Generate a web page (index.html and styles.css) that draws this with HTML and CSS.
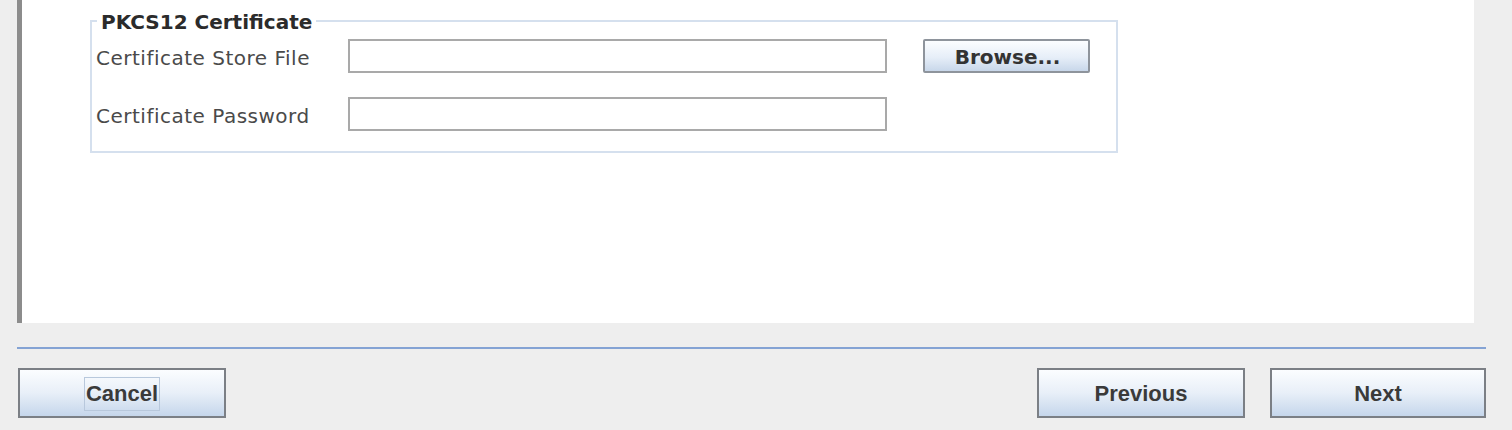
FILE: index.html
```html
<!DOCTYPE html>
<html>
<head>
<meta charset="utf-8">
<link rel="stylesheet" href="styles.css">
</head>
<body>
<div class="window">
  <div class="panel">
    <fieldset class="group">
      <legend class="legend">PKCS12 Certificate</legend>
      <div class="row">
        <label class="label">Certificate Store File</label>
        <input class="field" type="text">
        <button class="browse">Browse...</button>
      </div>
      <div class="row">
        <label class="label">Certificate Password</label>
        <input class="field" type="password">
      </div>
    </fieldset>
  </div>
  <div class="separator"></div>
  <div class="footer">
    <button class="btn"><span class="focus">Cancel</span></button>
    <div class="spacer"></div>
    <button class="btn">Previous</button>
    <button class="btn wide">Next</button>
  </div>
</div>
</body>
</html>
```

FILE: styles.css
```css
html, body {
  margin: 0;
  padding: 0;
  background: #eeeeee;
  width: 1512px;
  height: 430px;
  overflow: hidden;
}

.window {
  display: flex;
  flex-direction: column;
}

.panel {
  margin-left: 17px;
  margin-right: 38px;
  height: 323px;
  background: #ffffff;
  border-left: 5px solid #8c8c8c;
  box-sizing: border-box;
  padding-top: 8px;
  padding-left: 68px;
}

.group {
  margin: 0;
  width: 1028px;
  box-sizing: border-box;
  border: 2px solid #d5e0ee;
  padding: 5px 0 20px 4px;
  display: flex;
  flex-direction: column;
  gap: 24px;
}

.legend {
  font-family: "DejaVu Sans", sans-serif;
  font-weight: bold;
  font-size: 20px;
  line-height: 24px;
  color: #2b2b2b;
  padding: 2px 4px 0 4px;
  margin-left: 1px;
}

.row {
  display: flex;
  align-items: center;
  height: 34px;
}

.label {
  width: 252px;
  padding-top: 4px;
  font-family: "DejaVu Sans", sans-serif;
  font-size: 20px;
  letter-spacing: 0.5px;
  color: #4a4a4a;
}

.field {
  width: 539px;
  height: 34px;
  box-sizing: border-box;
  border: 2px solid #a9a9a9;
  background: #ffffff;
  margin: 0;
  padding: 0 4px;
}

.browse {
  margin-left: 36px;
  width: 167px;
  height: 34px;
  box-sizing: border-box;
  border: 2px solid #8e949c;
  border-radius: 2px;
  background: linear-gradient(#fbfdff, #e6eef8 55%, #c8d7ea);
  font-family: "DejaVu Sans", sans-serif;
  font-weight: bold;
  font-size: 20px;
  color: #333333;
  padding: 2px 0 0 2px;
}

.separator {
  margin: 24px 26px 0 17px;
  height: 2px;
  background: #84a3d4;
}

.footer {
  display: flex;
  margin: 19px 26px 0 18px;
}

.spacer {
  flex: 1;
}

.btn {
  width: 208px;
  height: 50px;
  box-sizing: border-box;
  border: 2px solid #7b7f85;
  background: linear-gradient(#fbfdff, #e8eff8 50%, #c5d6eb);
  font-family: "Liberation Sans", Arial, sans-serif;
  font-weight: bold;
  font-size: 22px;
  color: #3a3a3a;
  padding: 2px 0 0 0;
  display: flex;
  align-items: center;
  justify-content: center;
}

.btn + .btn {
  margin-left: 25px;
}

.btn.wide {
  width: 216px;
}

.focus {
  border: 1px solid #b8c8dc;
  padding: 5px 1px 5px 1px;
  line-height: 22px;
}
```
